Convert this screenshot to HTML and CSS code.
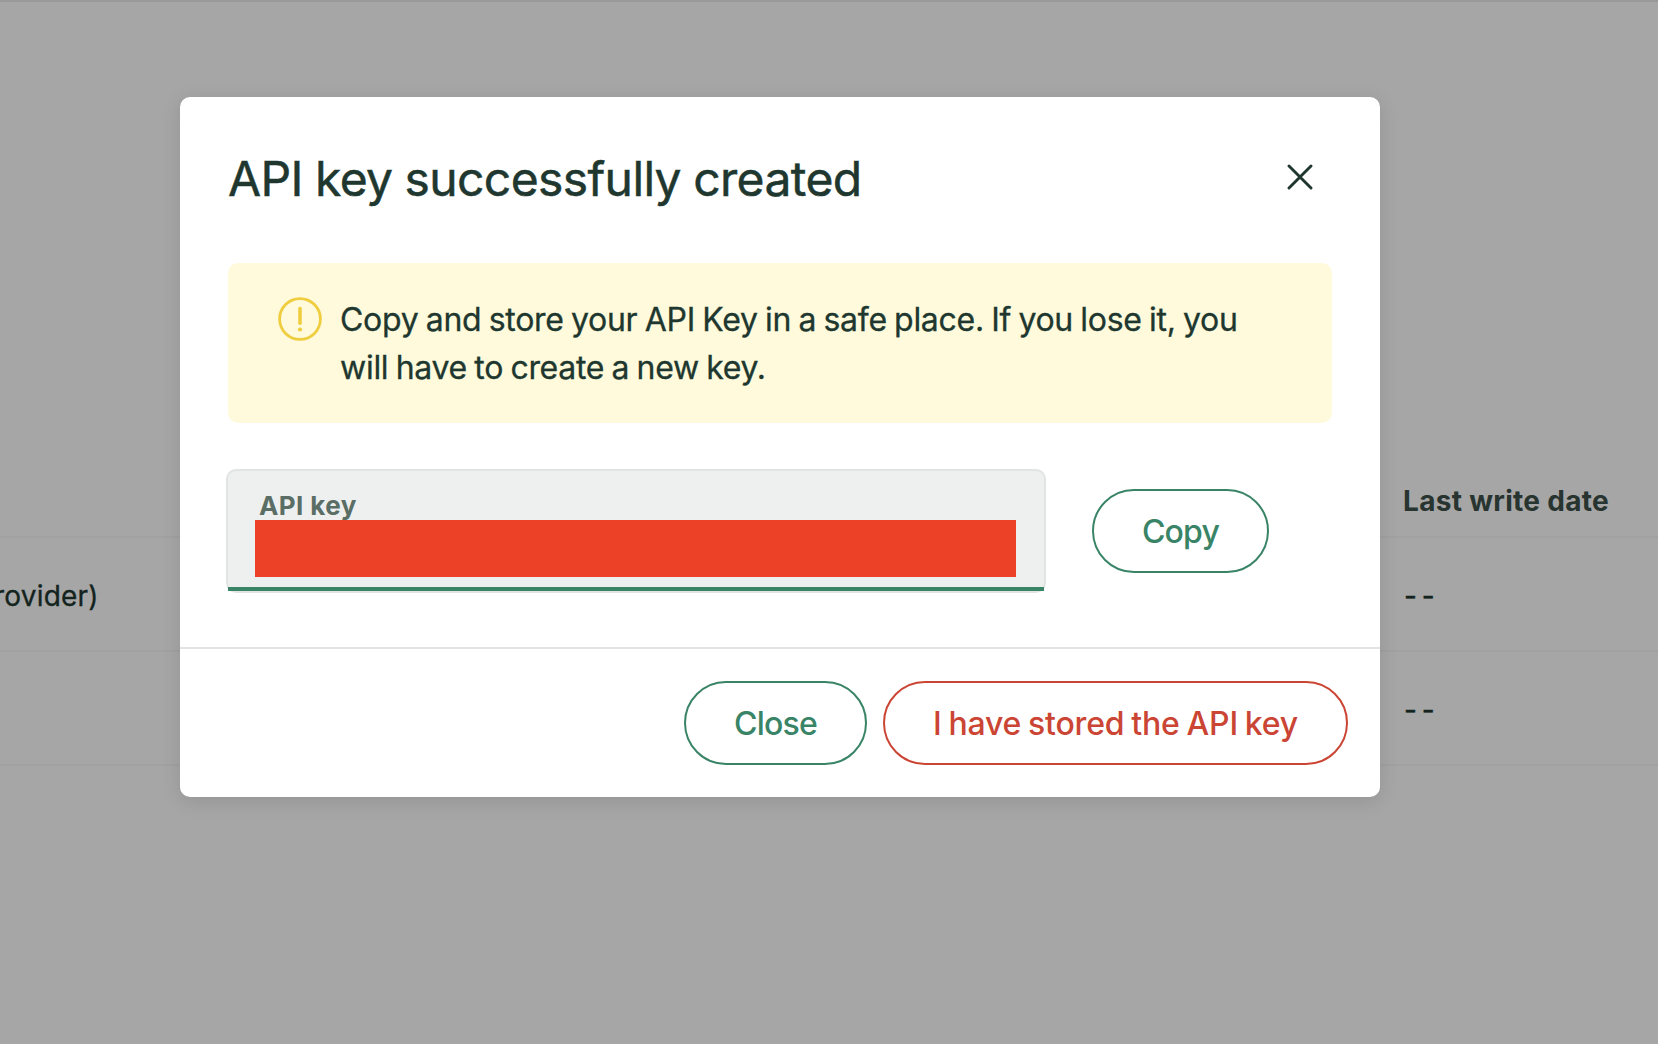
FILE: index.html
```html
<!DOCTYPE html>
<html lang="en">
<head>
<meta charset="utf-8">
<title>API keys</title>
<link rel="stylesheet" href="styles.css">
</head>
<body>
<main class="page">
  <div class="row row-head"><span></span><span class="head-text">Last write date</span></div>
  <div class="row"><span class="provider">rovider)</span><span class="dashes">- -</span></div>
  <div class="row"><span></span><span class="dashes">- -</span></div>
</main>
<div class="overlay">
  <section class="modal" role="dialog" aria-labelledby="title">
    <div class="modal-body">
      <header class="modal-header">
        <h1 class="title" id="title">API key successfully created</h1>
        <button class="dismiss" aria-label="Close dialog">
          <svg width="26" height="26" viewBox="0 0 26 26"><path d="M2 2 24 24M24 2 2 24"/></svg>
        </button>
      </header>
      <div class="alert">
        <svg class="alert-icon" width="44" height="44" viewBox="0 0 44 44"><circle cx="22" cy="22" r="20.4"/><path d="M22 11.5v14.8"/><circle class="dot" cx="22" cy="32.5" r="2.1"/></svg>
        <p class="alert-text">Copy and store your API Key in a safe place. If you lose it, you<br>will have to create a new key.</p>
      </div>
      <div class="field-row">
        <div class="field">
          <span class="label">API key</span>
          <div class="redacted"></div>
          <div class="underline"></div>
        </div>
        <button class="btn btn-copy">Copy</button>
      </div>
    </div>
    <footer class="modal-footer">
      <button class="btn btn-close">Close</button>
      <button class="btn btn-danger">I have stored the API key</button>
    </footer>
  </section>
</div>
</body>
</html>
```
FILE: styles.css
```css
* { box-sizing: border-box; }
body {
  margin: 0;
  height: 1044px;
  overflow: hidden;
  background: #fff;
  color: #20372f;
  font-family: Inter, "Liberation Sans", sans-serif;
}
.page {
  height: 1044px;
  padding-top: 462px;
  border-top: 2px solid #ebebeb;
}
.row {
  display: grid;
  grid-template-columns: 1404px 1fr;
  align-items: center;
  height: 114px;
  padding-top: 3px;
  border-bottom: 2px solid #f6f7f7;
  font-size: 28px;
  white-space: nowrap;
}
.row-head {
  height: 74px;
  padding-top: 1px;
  grid-template-columns: 1403px 1fr;
  color: #3d5149;
  font-weight: 700;
}
.head-text { letter-spacing: 0.3px; }
.provider { margin-left: -6px; letter-spacing: 0.2px; -webkit-text-stroke: 0.3px; }
.dashes { letter-spacing: 0.2px; word-spacing: -3.5px; -webkit-text-stroke: 0.4px; }
.overlay {
  position: absolute;
  inset: 0;
  padding: 97px 0 0 180px;
  background: rgba(0, 0, 0, 0.35);
}
.modal {
  width: 1200px;
  height: 700px;
  display: flex;
  flex-direction: column;
  border-radius: 10px;
  background: #fff;
  box-shadow: 0 4px 20px rgba(0, 0, 0, 0.11);
}
.modal-body { flex: 1; padding: 48px 48px 0; }
.modal-header {
  display: flex;
  justify-content: space-between;
  height: 118px;
}
.title {
  margin: 0;
  font-size: 48px;
  line-height: 68px;
  font-weight: 400;
  letter-spacing: -0.62px;
  word-spacing: -0.7px;
  white-space: nowrap;
  -webkit-text-stroke: 0.5px;
}
button { font-family: inherit; background: none; padding: 0; }
.dismiss { display: flex; align-self: flex-start; margin: 19px 19px 0 0; border: 0; }
.dismiss svg { fill: none; stroke: #20372f; stroke-width: 2.9; stroke-linecap: round; }
.alert {
  display: flex;
  gap: 18px;
  height: 160px;
  padding: 32px 50px;
  border-radius: 10px;
  background: #fefadb;
}
.alert-icon { flex: none; margin-top: 2px; fill: none; stroke: #efcd3f; stroke-width: 2.8; stroke-linecap: round; }
.alert-icon path { stroke-width: 3.6; }
.alert-icon .dot { fill: #efcd3f; stroke: none; }
.alert-text {
  margin: 1px 0 0;
  font-size: 32px;
  line-height: 48px;
  letter-spacing: -0.28px;
  word-spacing: -1.4px;
  white-space: nowrap;
  -webkit-text-stroke: 0.3px;
}
.field-row { display: flex; align-items: flex-start; gap: 46px; margin: 46px 0 0 -2px; }
.field {
  width: 820px;
  height: 124px;
  display: flex;
  flex-direction: column;
  border: 2px solid #e0e5e3;
  border-radius: 10px;
  background: #eef0ef;
}
.label {
  height: 49px;
  padding: 19px 0 0 31px;
  color: #5b6e66;
  font-size: 26px;
  line-height: 32px;
  font-weight: 700;
  letter-spacing: 0.4px;
}
.redacted { width: 761px; height: 57px; margin-left: 27px; background: #ec4027; }
.underline { height: 4px; margin-top: auto; background: #398467; }
.btn {
  height: 84px;
  padding-top: 1px;
  border: 2px solid #398467;
  border-radius: 42px;
  color: #398467;
  font-size: 32px;
  font-weight: 500;
  letter-spacing: -0.8px;
  white-space: nowrap;
}
.btn-copy { width: 177px; margin-top: 20px; }
.btn-close { width: 183px; }
.btn-danger {
  width: 465px;
  border-color: #cb4534;
  color: #cb4534;
  letter-spacing: -0.2px;
  word-spacing: -1.4px;
}
.modal-footer {
  display: flex;
  justify-content: flex-end;
  gap: 16px;
  height: 150px;
  padding: 32px 32px 0;
  border-top: 2px solid #e0e5e3;
}
```
